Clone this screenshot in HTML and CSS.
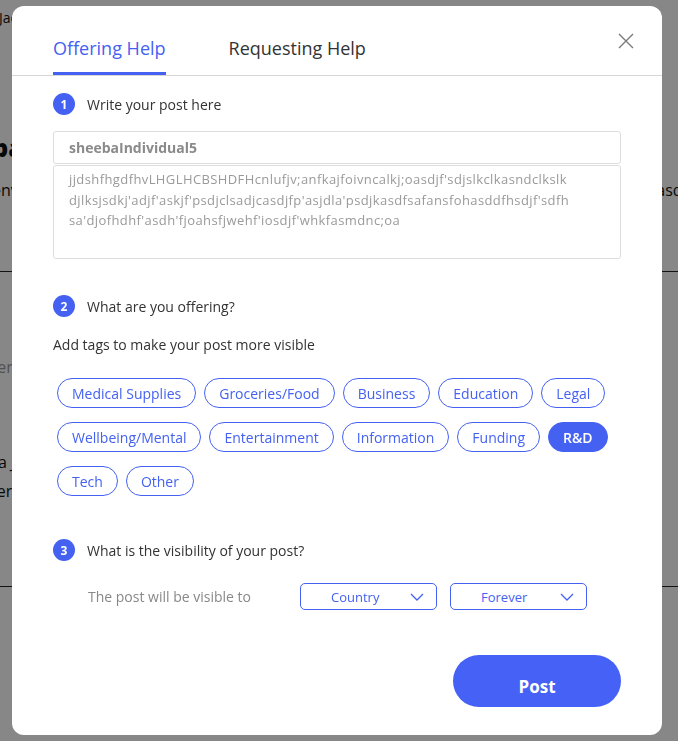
FILE: index.html
```html
<!DOCTYPE html>
<html lang="en">
<head>
    <meta charset="UTF-8">
    <meta name="viewport" content="width=device-width, initial-scale=1.0">
    <title>Create post</title>
    <link rel="stylesheet" href="styles.css">
</head>
<body>
    <!-- Feed behind the modal -->
    <div class="feed">
        <div class="feed-top">Jack Donovan</div>
        <div class="feed-card card-first">
            <div class="feed-name">Sheba</div>
            <div class="feed-line"><span>env</span><span>asdjf</span></div>
        </div>
        <div class="feed-card card-second">
            <div class="feed-muted">Content</div>
            <div class="feed-line"><span>a J</span></div>
            <div class="feed-line"><span>Ter</span></div>
        </div>
    </div>

    <div class="overlay">
        <div class="modal">
            <div class="modal-head">
                <div class="tabs">
                    <button class="tab active">Offering Help</button>
                    <button class="tab">Requesting Help</button>
                </div>
                <button class="close" aria-label="Close">
                    <svg width="16" height="16" viewBox="0 0 16 16">
                        <path d="M1 1 L15 15 M15 1 L1 15" stroke="#7a7a7a" stroke-width="1.4" fill="none"/>
                    </svg>
                </button>
            </div>

            <div class="modal-body">
                <div class="step">
                    <div class="step-title"><span class="step-num">1</span>Write your post here</div>
                    <div class="post-user">sheebaIndividual5</div>
                    <div class="post-text">
                        <div>jjdshfhgdfhvLHGLHCBSHDFHcnlufjv;anfkajfoivncalkj;oasdjf'sdjslkclkasndclkslk</div>
                        <div>djlksjsdkj'adjf'askjf'psdjclsadjcasdjfp'asjdla'psdjkasdfsafansfohasddfhsdjf'sdfh</div>
                        <div>sa'djofhdhf'asdh'fjoahsfjwehf'iosdjf'whkfasmdnc;oa</div>
                    </div>
                </div>

                <div class="step">
                    <div class="step-title"><span class="step-num">2</span>What are you offering?</div>
                    <p class="hint">Add tags to make your post more visible</p>
                    <div class="tags">
                        <button class="tag">Medical Supplies</button>
                        <button class="tag">Groceries/Food</button>
                        <button class="tag">Business</button>
                        <button class="tag">Education</button>
                        <button class="tag">Legal</button>
                        <button class="tag">Wellbeing/Mental</button>
                        <button class="tag">Entertainment</button>
                        <button class="tag">Information</button>
                        <button class="tag">Funding</button>
                        <button class="tag selected">R&amp;D</button>
                        <button class="tag">Tech</button>
                        <button class="tag">Other</button>
                    </div>
                </div>

                <div class="step">
                    <div class="step-title"><span class="step-num">3</span>What is the visibility of your post?</div>
                    <div class="visibility">
                        <span class="visibility-label">The post will be visible to</span>
                        <button class="select">
                            <span>Country</span>
                            <svg width="14" height="8" viewBox="0 0 14 8"><path d="M1 1 L7 7 L13 1" stroke="#4461f2" stroke-width="1.3" fill="none"/></svg>
                        </button>
                        <button class="select">
                            <span>Forever</span>
                            <svg width="14" height="8" viewBox="0 0 14 8"><path d="M1 1 L7 7 L13 1" stroke="#4461f2" stroke-width="1.3" fill="none"/></svg>
                        </button>
                    </div>
                </div>
            </div>

            <div class="modal-foot">
                <button class="post-button">Post</button>
            </div>
        </div>
    </div>
</body>
</html>
```

FILE: styles.css
```css
body {
    margin: 0;
    font-family: "Open Sans", sans-serif;
    background: #fff;
    color: #333;
}
button {
    font-family: inherit;
    cursor: pointer;
}

/* feed underneath */
.feed {
    height: 741px;
    overflow: hidden;
}
.feed-top {
    padding: 9px 0 0;
    height: 20px;
    line-height: 18px;
    font-size: 14px;
    color: #111;
    margin-left: -1px;
}
.feed-card {
    border-bottom: 1px solid #222;
    box-sizing: border-box;
}
.card-first {
    height: 243px;
    padding-top: 104px;
}
.card-second {
    height: 315px;
    padding-top: 85px;
}
.feed-name {
    line-height: 30px;
    font-size: 24px;
    font-weight: 800;
    color: #111;
    margin-left: -52px;
}
.feed-line {
    display: flex;
    justify-content: space-between;
    font-size: 16px;
    line-height: 20px;
    color: #111;
    white-space: nowrap;
}
.card-first .feed-line {
    margin: 17px -14px 0 -8px;
}
.feed-muted {
    line-height: 20px;
    font-size: 16px;
    color: #999;
    margin-left: -38px;
}
.card-second .feed-line {
    line-height: 29px;
    margin-left: -2px;
}
.card-second .feed-muted + .feed-line {
    margin-top: 71px;
}
.card-second .feed-line:last-child {
    margin-left: -12px;
}

/* modal */
.overlay {
    position: fixed;
    inset: 0;
    background: rgba(0, 0, 0, 0.47);
}
.modal {
    margin: 6px 0 0 12px;
    width: 650px;
    height: 729px;
    background: #fff;
    border-radius: 12px;
    display: flex;
    flex-direction: column;
}
.modal-head {
    display: flex;
    align-items: flex-start;
    justify-content: space-between;
    border-bottom: 1px solid #d6d6d6;
    padding: 0 28px 0 41px;
}
.tabs {
    display: flex;
    gap: 63px;
    padding-top: 30px;
}
.tab {
    background: none;
    border: none;
    padding: 0 0 12px;
    font-size: 18px;
    color: #333;
    border-bottom: 3px solid transparent;
}
.tab.active {
    color: #4461f2;
    border-bottom-color: #4461f2;
}
.close {
    background: none;
    border: none;
    padding: 0;
    margin-top: 27px;
    width: 16px;
    height: 16px;
}

.modal-body {
    padding: 16px 41px 0;
    flex: 1;
}
.step {
    margin-bottom: 35px;
}
.step:nth-child(2) {
    margin-bottom: 42px;
}
.step-title {
    display: flex;
    align-items: center;
    gap: 12px;
    font-size: 14px;
    color: #333;
    height: 24px;
}
.step-num {
    width: 22px;
    height: 22px;
    border-radius: 50%;
    background: #4461f2;
    color: #fff;
    font-size: 12px;
    font-weight: 700;
    display: flex;
    align-items: center;
    justify-content: center;
}
.post-user {
    margin-top: 15px;
    height: 31px;
    line-height: 31px;
    border: 1px solid #ddd;
    border-radius: 3px;
    padding: 0 15px;
    font-size: 14px;
    font-weight: 700;
    color: #8a8a8a;
}
.post-text {
    margin-top: 1px;
    height: 80px;
    border: 1px solid #ddd;
    border-radius: 3px;
    padding: 3px 15px 9px;
    font-size: 13px;
    letter-spacing: 0.4px;
    line-height: 20.5px;
    color: #9a9a9a;
    white-space: nowrap;
}

.hint {
    margin: 17px 0 0;
    font-size: 14px;
    color: #333;
}
.tags {
    display: flex;
    flex-wrap: wrap;
    gap: 14px 8px;
    padding: 24px 0 0 4px;
}
.tag {
    height: 30px;
    padding: 0 14px;
    border: 1px solid #4461f2;
    border-radius: 15px;
    background: #fff;
    color: #4461f2;
    font-size: 14px;
}
.tag.selected {
    background: #4461f2;
    color: #fff;
    font-weight: 600;
}

.visibility {
    display: flex;
    align-items: center;
    padding: 21px 0 0 35px;
}
.visibility-label {
    font-size: 14px;
    color: #888;
    width: 212px;
}
.select {
    width: 137px;
    height: 27px;
    margin-right: 13px;
    border: 1px solid #4461f2;
    border-radius: 5px;
    background: #fff;
    color: #4461f2;
    font-size: 13px;
    display: flex;
    align-items: center;
    justify-content: space-between;
    padding: 0 12px 0 30px;
}

.modal-foot {
    display: flex;
    justify-content: flex-end;
    padding: 0 41px 28px;
}
.post-button {
    width: 168px;
    height: 52px;
    border: none;
    border-radius: 26px;
    background: #4661f5;
    color: #fff;
    font-size: 17px;
    font-weight: 700;
    padding-top: 12px;
}
```
